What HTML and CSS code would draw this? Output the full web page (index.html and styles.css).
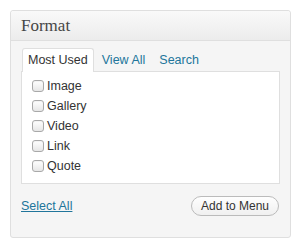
FILE: index.html
```html
<!DOCTYPE html>
<html lang="en">
<head>
    <meta charset="UTF-8">
    <title>Format</title>
    <link rel="stylesheet" href="styles.css">
</head>
<body>
    <div class="postbox">
        <h3 class="hndle">Format</h3>

        <div class="inside">
            <ul class="tabs">
                <li class="tab active">Most Used</li>
                <li class="tab"><a href="#">View All</a></li>
                <li class="tab"><a href="#">Search</a></li>
            </ul>

            <div class="tabs-panel">
                <label class="item"><span class="check"></span>Image</label>
                <label class="item"><span class="check"></span>Gallery</label>
                <label class="item"><span class="check"></span>Video</label>
                <label class="item"><span class="check"></span>Link</label>
                <label class="item"><span class="check"></span>Quote</label>
            </div>

            <div class="actions">
                <a href="#" class="select-all">Select All</a>
                <button class="button">Add to Menu</button>
            </div>
        </div>
    </div>
</body>
</html>
```

FILE: styles.css
```css
:root {
    --border-color: #dfdfdf;
    --link-color: #21759b;
    --text-color: #333;
}

body {
    margin: 0;
    padding: 10px;
    font-family: 'Liberation Sans', Arial, sans-serif;
    font-size: 12px;
    color: var(--text-color);
    background-color: white;
}

.postbox {
    width: 279px;
    border: 1px solid var(--border-color);
    border-radius: 3px;
    background-color: #f5f5f5;
    box-shadow: inset 0 1px 0 #fff;
}

.hndle {
    margin: 0;
    height: 29px;
    line-height: 29px;
    padding: 0 10px;
    font-family: 'Liberation Serif', Georgia, serif;
    font-size: 17px;
    font-weight: normal;
    color: #464646;
    background: linear-gradient(to bottom, #f9f9f9, #ececec);
    border-bottom: 1px solid var(--border-color);
    border-radius: 3px 3px 0 0;
}

.inside {
    padding: 7px 10px 21px 10px;
}

.tabs {
    display: flex;
    list-style: none;
    margin: 0;
    padding: 0 0 0 1px;
}

.tab {
    padding: 4px 5px 4px 5px;
    line-height: 14px;
    border: 1px solid transparent;
    border-bottom: none;
    border-radius: 3px 3px 0 0;
    font-size: 12.5px;
    margin-right: 2px;
}

.tab.active {
    background-color: white;
    border-color: var(--border-color);
    margin-bottom: -1px;
    padding-bottom: 5px;
    position: relative;
}

.tab a {
    color: var(--link-color);
    text-decoration: none;
}

.tabs-panel {
    background-color: white;
    border: 1px solid var(--border-color);
    padding: 4px 10px 7px 10px;
}

.item {
    display: flex;
    align-items: center;
    height: 20px;
    font-size: 12.5px;
}

.check {
    display: inline-block;
    width: 10px;
    height: 10px;
    margin-right: 3px;
    border: 1px solid #a9a9a9;
    border-radius: 3px;
    background: linear-gradient(to bottom, #fff, #e6e6e6);
    box-shadow: inset 0 1px 1px rgba(0, 0, 0, 0.05);
}

.actions {
    display: flex;
    justify-content: space-between;
    align-items: center;
    margin-top: 12px;
    padding-right: 1px;
}

.select-all {
    color: var(--link-color);
    font-size: 12.5px;
    text-decoration: underline;
}

.button {
    font-family: 'Liberation Sans', Arial, sans-serif;
    font-size: 12px;
    color: var(--text-color);
    height: 20px;
    padding: 0 9px;
    border: 1px solid #bbb;
    border-radius: 11px;
    background: linear-gradient(to bottom, #fefefe, #f0f0f0);
    cursor: pointer;
}
```
